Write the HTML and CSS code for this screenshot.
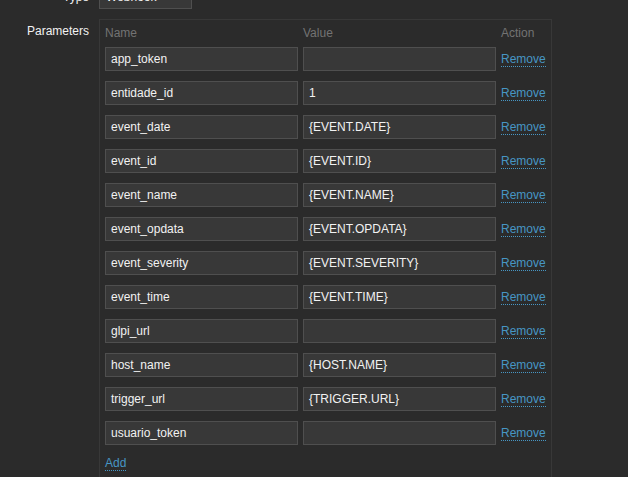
FILE: index.html
```html
<!DOCTYPE html>
<html>
<head>
<meta charset="utf-8">
<link rel="stylesheet" href="styles.css">
</head>
<body>
<div class="form">
  <div class="label label-inline">Type</div>
  <div class="field">
    <div class="select">Webhook</div>
  </div>
  <div class="label label-top">Parameters</div>
  <div class="field">
    <div class="params">
      <div class="th">Name</div>
      <div class="th">Value</div>
      <div class="th">Action</div>

      <div class="input">app_token</div><div class="input"></div><div class="action"><a class="link">Remove</a></div>
      <div class="input">entidade_id</div><div class="input">1</div><div class="action"><a class="link">Remove</a></div>
      <div class="input">event_date</div><div class="input">{EVENT.DATE}</div><div class="action"><a class="link">Remove</a></div>
      <div class="input">event_id</div><div class="input">{EVENT.ID}</div><div class="action"><a class="link">Remove</a></div>
      <div class="input">event_name</div><div class="input">{EVENT.NAME}</div><div class="action"><a class="link">Remove</a></div>
      <div class="input">event_opdata</div><div class="input">{EVENT.OPDATA}</div><div class="action"><a class="link">Remove</a></div>
      <div class="input">event_severity</div><div class="input">{EVENT.SEVERITY}</div><div class="action"><a class="link">Remove</a></div>
      <div class="input">event_time</div><div class="input">{EVENT.TIME}</div><div class="action"><a class="link">Remove</a></div>
      <div class="input">glpi_url</div><div class="input"></div><div class="action"><a class="link">Remove</a></div>
      <div class="input">host_name</div><div class="input">{HOST.NAME}</div><div class="action"><a class="link">Remove</a></div>
      <div class="input">trigger_url</div><div class="input">{TRIGGER.URL}</div><div class="action"><a class="link">Remove</a></div>
      <div class="input">usuario_token</div><div class="input"></div><div class="action"><a class="link">Remove</a></div>

      <div class="add"><a class="link">Add</a></div>
    </div>
  </div>
</div>
</body>
</html>
```
FILE: styles.css
```css
html, body {
  margin: 0;
  padding: 0;
  background: #2b2b2b;
  overflow: hidden;
}
body {
  font-family: "Liberation Sans", Arial, sans-serif;
  font-size: 12px;
  color: #f2f2f2;
}
.form {
  display: grid;
  grid-template-columns: 89px auto;
  column-gap: 10px;
  row-gap: 10px;
  margin-top: -15px;
}
.label {
  text-align: right;
  line-height: 14px;
  color: #f2f2f2;
}
.label-inline {
  line-height: 24px;
}
.label-top {
  padding-top: 5px;
}
.field {
  display: flex;
  align-items: flex-start;
}
.select {
  width: 93px;
  height: 24px;
  box-sizing: border-box;
  background: #383838;
  border: 1px solid #4f4f4f;
  padding: 0 6px;
  line-height: 22px;
}
.params {
  display: grid;
  grid-template-columns: 193px 193px auto;
  column-gap: 5px;
  row-gap: 10px;
  border: 1px solid #383838;
  border-bottom: none;
  padding: 0 5px 12px 5px;
}
.th {
  color: #737373;
  line-height: 14px;
  padding-top: 6px;
  margin-bottom: -3px;
}
.input {
  height: 24px;
  box-sizing: border-box;
  background: #383838;
  border: 1px solid #4f4f4f;
  padding: 0 5px;
  line-height: 22px;
  color: #f2f2f2;
  white-space: nowrap;
}
.action {
  display: flex;
  align-items: center;
  height: 24px;
}
.link {
  color: #4796c4;
  border-bottom: 1px dotted #4796c4;
  line-height: 14px;
  cursor: pointer;
}
.add {
  grid-column: 1 / 4;
  line-height: 14px;
  margin-top: 1px;
}
```
